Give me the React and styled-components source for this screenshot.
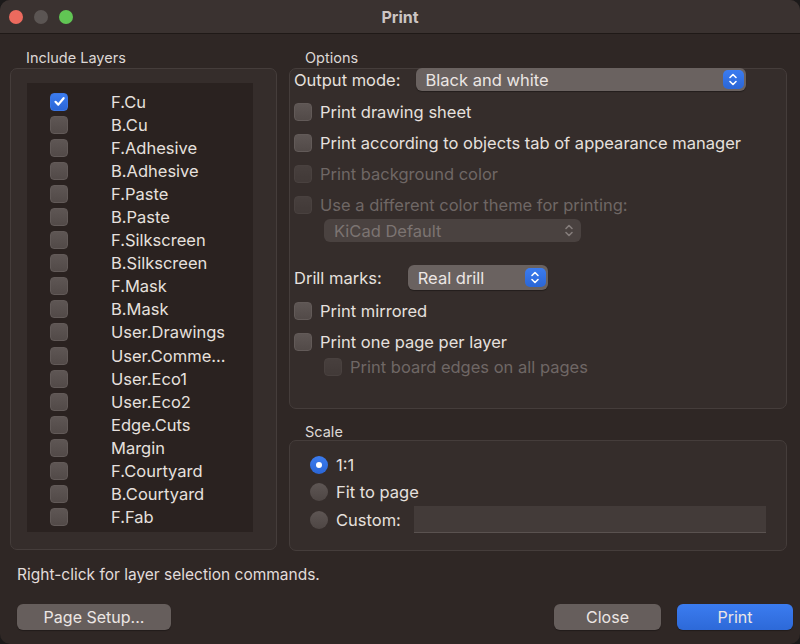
import styled, { createGlobalStyle } from "styled-components";

const GlobalStyle = createGlobalStyle`
  html, body {
    margin: 0;
    padding: 0;
    background: #1c1a1a;
  }
  body {
    font-family: "Inter", "Liberation Sans", sans-serif;
    color: #e6e0de;
  }
`;

const layers = [
  "F.Cu",
  "B.Cu",
  "F.Adhesive",
  "B.Adhesive",
  "F.Paste",
  "B.Paste",
  "F.Silkscreen",
  "B.Silkscreen",
  "F.Mask",
  "B.Mask",
  "User.Drawings",
  "User.Comme...",
  "User.Eco1",
  "User.Eco2",
  "Edge.Cuts",
  "Margin",
  "F.Courtyard",
  "B.Courtyard",
  "F.Fab",
];

const Check = ({ checked, disabled }) => (
  <CheckBox $checked={checked} $disabled={disabled}>
    {checked && (
      <svg width="13" height="13" viewBox="0 0 13 13">
        <path
          d="M2.5 6.8 L5.3 9.6 L10.6 3.2"
          fill="none"
          stroke="#fff"
          strokeWidth="2.2"
          strokeLinecap="round"
          strokeLinejoin="round"
        />
      </svg>
    )}
  </CheckBox>
);

const Stepper = ({ disabled }) => (
  <StepperBox $disabled={disabled}>
    <svg width="10" height="15" viewBox="0 0 10 15">
      <path
        d="M2 5.5 L5 2.5 L8 5.5 M2 9.5 L5 12.5 L8 9.5"
        fill="none"
        stroke={disabled ? "#857d7b" : "#fff"}
        strokeWidth="1.6"
        strokeLinecap="round"
        strokeLinejoin="round"
      />
    </svg>
  </StepperBox>
);

const Option = ({ label, disabled }) => (
  <OptionRow $disabled={disabled}>
    <Check disabled={disabled} />
    <span>{label}</span>
  </OptionRow>
);

const App = () => {
  return (
    <>
      <GlobalStyle />
      <Window>
        <TitleBar>
          <Lights>
            <Light $color="#ec6a5e" />
            <Light $color="#5b5553" />
            <Light $color="#61c554" />
          </Lights>
          <Title>Print</Title>
        </TitleBar>

        <Content>
          <Columns>
            <Column>
              <GroupLabel>Include Layers</GroupLabel>
              <LayerGroup>
                <LayerList>
                  {layers.map((name, i) => (
                    <LayerRow key={name}>
                      <Check checked={i === 0} />
                      <span>{name}</span>
                    </LayerRow>
                  ))}
                </LayerList>
              </LayerGroup>
            </Column>

            <Column>
              <GroupLabel>Options</GroupLabel>
              <OptionsGroup>
                <FieldRow>
                  <FieldLabel>Output mode:</FieldLabel>
                  <Select $width={330}>
                    <span>Black and white</span>
                    <Stepper />
                  </Select>
                </FieldRow>
                <OptionList>
                  <Option label="Print drawing sheet" />
                  <Option label="Print according to objects tab of appearance manager" />
                  <Option label="Print background color" disabled />
                  <Option label="Use a different color theme for printing:" disabled />
                </OptionList>
                <ThemeSelect $width={257} $disabled>
                  <span>KiCad Default</span>
                  <Stepper disabled />
                </ThemeSelect>
                <DrillRow>
                  <FieldLabel>Drill marks:</FieldLabel>
                  <Select $width={140} $tall>
                    <span>Real drill</span>
                    <Stepper />
                  </Select>
                </DrillRow>
                <OptionList $top={9}>
                  <Option label="Print mirrored" />
                  <Option label="Print one page per layer" />
                </OptionList>
                <SubOption>
                  <Option label="Print board edges on all pages" disabled />
                </SubOption>
              </OptionsGroup>

              <GroupLabel $top={12} $drop>
                Scale
              </GroupLabel>
              <ScaleGroup>
                <RadioRow>
                  <Radio $on />
                  <span>1:1</span>
                </RadioRow>
                <RadioRow>
                  <Radio />
                  <span>Fit to page</span>
                </RadioRow>
                <RadioRow>
                  <Radio />
                  <span>Custom:</span>
                  <TextInput />
                </RadioRow>
              </ScaleGroup>
            </Column>
          </Columns>

          <Hint>Right-click for layer selection commands.</Hint>

          <ButtonBar>
            <Button $width={154}>Page Setup...</Button>
            <Spacer />
            <Button $width={107}>Close</Button>
            <Button $width={116} $primary>
              Print
            </Button>
          </ButtonBar>
        </Content>
      </Window>
    </>
  );
};

const Window = styled.div`
  width: 800px;
  height: 644px;
  background: #2f2725;
  border-radius: 10px;
  overflow: hidden;
  display: flex;
  flex-direction: column;
`;

const TitleBar = styled.div`
  height: 33px;
  background: #3a3230;
  border-bottom: 1px solid #1f1917;
  display: flex;
  align-items: center;
  justify-content: center;
  position: relative;
`;

const Lights = styled.div`
  position: absolute;
  left: 9px;
  top: 10px;
  display: flex;
  gap: 11px;
`;

const Light = styled.div`
  width: 14px;
  height: 14px;
  border-radius: 50%;
  background: ${(p) => p.$color};
`;

const Title = styled.div`
  font-size: 16px;
  font-weight: 700;
  color: #cbc5c3;
  margin-top: 1px;
`;

const Content = styled.div`
  flex: 1;
  display: flex;
  flex-direction: column;
  padding: 15px 13px 0 10px;
`;

const Columns = styled.div`
  display: grid;
  grid-template-columns: 267px 498px;
  gap: 12px;
`;

const Column = styled.div`
  display: flex;
  flex-direction: column;
`;

const GroupLabel = styled.div`
  font-size: 14.5px;
  color: #ddd7d5;
  padding-left: 16px;
  height: 19px;
  line-height: ${(p) => (p.$drop ? 22 : 18)}px;
  margin-top: ${(p) => p.$top || 0}px;
`;

const Group = styled.div`
  background: #352d2b;
  border: 1px solid #453d3b;
  border-radius: 7px;
  box-sizing: border-box;
`;

const LayerGroup = styled(Group)`
  height: 482px;
  padding: 14px 23px 0 16px;
`;

const LayerList = styled.div`
  background: #2a2220;
  height: 449px;
  padding: 7px 0 0 23px;
  box-sizing: border-box;
  display: flex;
  flex-direction: column;
`;

const LayerRow = styled.div`
  height: 23.1px;
  display: flex;
  align-items: center;
  gap: 43px;
  font-size: 16.5px;
  color: #e6e0de;
`;

const CheckBox = styled.div`
  width: 18px;
  height: 18px;
  border-radius: 4px;
  box-sizing: border-box;
  flex: none;
  display: flex;
  align-items: center;
  justify-content: center;
  background: ${(p) =>
    p.$checked
      ? "linear-gradient(#3b7cf0, #2b66d6)"
      : "linear-gradient(#5e5654, #524a48)"};
  border: 1px solid ${(p) => (p.$checked ? "#3a76e6" : "#625a58")};
  opacity: ${(p) => (p.$disabled ? 0.45 : 1)};
`;

const OptionsGroup = styled(Group)`
  height: 341px;
  padding: 0 4px;
  display: flex;
  flex-direction: column;
`;

const FieldRow = styled.div`
  height: 23px;
  display: flex;
  align-items: center;
  gap: 15px;
  margin-top: -1px;
`;

const FieldLabel = styled.div`
  font-size: 16.5px;
  color: #e6e0de;
  white-space: nowrap;
`;

const Select = styled.div`
  width: ${(p) => p.$width}px;
  height: ${(p) => (p.$tall ? 25 : 23)}px;
  box-sizing: border-box;
  border-radius: 6px;
  background: ${(p) => (p.$disabled ? "#4a4240" : "#6a6260")};
  box-shadow: 0 1px 1px rgba(0, 0, 0, 0.35);
  display: flex;
  align-items: center;
  justify-content: space-between;
  padding: 0 2px 0 10px;
  font-size: 16.5px;
  color: ${(p) => (p.$disabled ? "#7c7472" : "#ece6e4")};
`;

const ThemeSelect = styled(Select)`
  margin: 2px 0 0 30px;
  box-shadow: none;
`;

const StepperBox = styled.div`
  width: 21px;
  height: 19px;
  border-radius: 5px;
  background: ${(p) => (p.$disabled ? "transparent" : "linear-gradient(#3b7cf0, #2b66d6)")};
  display: flex;
  align-items: center;
  justify-content: center;
`;

const OptionList = styled.div`
  display: flex;
  flex-direction: column;
  gap: 7px;
  margin-top: ${(p) => (p.$top !== undefined ? p.$top : 9)}px;
`;

const OptionRow = styled.div`
  height: 24px;
  display: flex;
  align-items: center;
  gap: 8px;
  font-size: 16.5px;
  color: ${(p) => (p.$disabled ? "#6f6765" : "#e6e0de")};
  white-space: nowrap;
`;

const SubOption = styled.div`
  margin: 1px 0 0 30px;
`;

const DrillRow = styled(FieldRow)`
  height: 25px;
  margin-top: 23px;
  gap: 26px;
`;

const ScaleGroup = styled(Group)`
  height: 111px;
  padding: 10px 20px 0 20px;
  display: flex;
  flex-direction: column;
`;

const RadioRow = styled.div`
  height: 27.5px;
  display: flex;
  align-items: center;
  gap: 8px;
  font-size: 16.5px;
  color: #e6e0de;
`;

const Radio = styled.div`
  width: 18px;
  height: 18px;
  border-radius: 50%;
  box-sizing: border-box;
  flex: none;
  background: ${(p) =>
    p.$on ? "linear-gradient(#3b7cf0, #2b66d6)" : "linear-gradient(#5e5654, #4e4644)"};
  position: relative;
  &::after {
    content: "";
    display: ${(p) => (p.$on ? "block" : "none")};
    position: absolute;
    left: 6px;
    top: 6px;
    width: 6px;
    height: 6px;
    border-radius: 50%;
    background: #fff;
  }
`;

const TextInput = styled.div`
  width: 353px;
  height: 27px;
  margin-left: 5px;
  background: #433b39;
  border-bottom: 1px solid #5a5250;
  box-sizing: border-box;
`;

const Hint = styled.div`
  font-size: 15.5px;
  color: #e2dcda;
  margin: 14px 0 0 7px;
  height: 20px;
  line-height: 20px;
  white-space: nowrap;
`;

const ButtonBar = styled.div`
  display: flex;
  align-items: center;
  gap: 16px;
  margin: 19px -6px 0 7px;
`;

const Spacer = styled.div`
  flex: 1;
`;

const Button = styled.div`
  width: ${(p) => p.$width}px;
  height: 26px;
  border-radius: 6px;
  display: flex;
  align-items: center;
  justify-content: center;
  font-size: 16px;
  color: #ece6e4;
  background: ${(p) =>
    p.$primary ? "linear-gradient(#3b7cf0, #2d69d8)" : "#665e5c"};
  box-shadow: 0 1px 1px rgba(0, 0, 0, 0.3);
`;

export default App;
